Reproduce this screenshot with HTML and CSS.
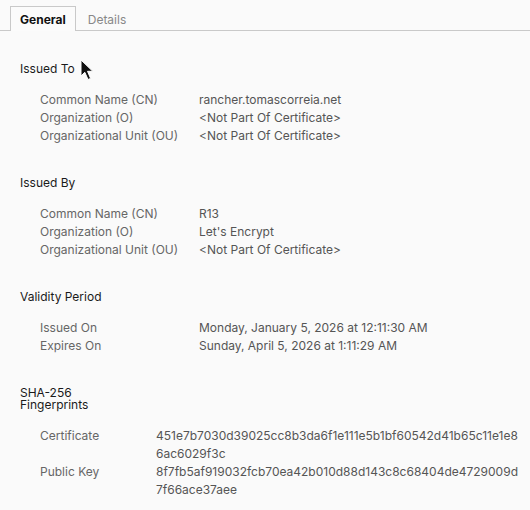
FILE: index.html
```html
<!DOCTYPE html>
<html>
<head>
    <title>Certificate Viewer</title>
    <link rel="stylesheet" href="styles.css">
</head>
<body>
    <div class="tabs">
        <div class="tab active">General</div>
        <div class="tab">Details</div>
    </div>

    <div class="content">
        <div class="section">
            <h2>Issued To</h2>
            <div class="rows">
                <span class="label">Common Name (CN)</span><span class="value">rancher.tomascorreia.net</span>
                <span class="label">Organization (O)</span><span class="value">&lt;Not Part Of Certificate&gt;</span>
                <span class="label">Organizational Unit (OU)</span><span class="value">&lt;Not Part Of Certificate&gt;</span>
            </div>
        </div>

        <div class="section">
            <h2>Issued By</h2>
            <div class="rows">
                <span class="label">Common Name (CN)</span><span class="value">R13</span>
                <span class="label">Organization (O)</span><span class="value">Let's Encrypt</span>
                <span class="label">Organizational Unit (OU)</span><span class="value">&lt;Not Part Of Certificate&gt;</span>
            </div>
        </div>

        <div class="section">
            <h2>Validity Period</h2>
            <div class="rows">
                <span class="label">Issued On</span><span class="value">Monday, January 5, 2026 at 12:11:30 AM</span>
                <span class="label">Expires On</span><span class="value">Sunday, April 5, 2026 at 1:11:29 AM</span>
            </div>
        </div>

        <div class="section">
            <h2 class="narrow">SHA-256 Fingerprints</h2>
            <div class="rows hashes">
                <span class="label">Certificate</span><span class="value">451e7b7030d39025cc8b3da6f1e111e5b1bf60542d41b65c11e1e86ac6029f3c</span>
                <span class="label">Public Key</span><span class="value">8f7fb5af919032fcb70ea42b010d88d143c8c68404de4729009d7f66ace37aee</span>
            </div>
        </div>
    </div>

    <!-- mouse pointer caught in the screenshot -->
    <svg class="cursor" width="15" height="23" viewBox="0 0 15 23">
        <path d="M1 1 L1 17 L4.8 13.3 L8 20.5 L10.6 19.4 L7.5 12.3 L12.8 12.3 Z" fill="#111" stroke="#fff" stroke-width="1"/>
    </svg>
</body>
</html>
```

FILE: styles.css
```css
body {
    margin: 0;
    font-family: 'Inter', 'Noto Sans', sans-serif;
    font-size: 12px;
    color: #222;
    background-color: #fafafa;
}

.tabs {
    display: flex;
    padding: 6px 0 0 10px;
    border-bottom: 1px solid #c9c9c9;
}

.tab {
    padding: 5px 9px 4px;
    line-height: 15px;
    color: #888;
    border: 1px solid transparent;
    border-bottom: none;
    margin-bottom: -1px;
}

.tab.active {
    font-weight: 700;
    color: #111;
    background: #fbfbfb;
    border-color: #c9c9c9;
    margin-right: 2px;
}

.content {
    padding: 32px 10px 0 20px;
}

.section {
    margin-bottom: 32px;
}

h2 {
    margin: 0 0 16px;
    font-size: 12px;
    font-weight: 400;
    line-height: 12px;
    color: #1a1a1a;
}

h2.narrow {
    max-width: 80px;
}

.rows {
    display: grid;
    grid-template-columns: 159px 1fr;
    padding-left: 20px;
    line-height: 18px;
}

.rows.hashes {
    grid-template-columns: 116px 1fr;
}

.label {
    color: #666;
}

.value {
    color: #555;
    word-break: break-all;
}

.cursor {
    position: absolute;
    left: 80px;
    top: 59px;
}
```
